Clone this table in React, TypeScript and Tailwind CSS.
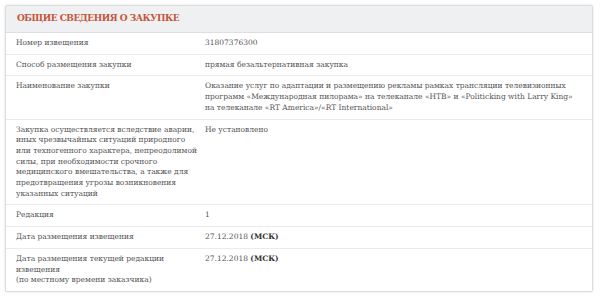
const rows: { label: React.ReactNode; value: React.ReactNode }[] = [
  { label: "Номер извещения", value: "31807376300" },
  { label: "Способ размещения закупки", value: "прямая безальтернативная закупка" },
  {
    label: "Наименование закупки",
    value:
      "Оказание услуг по адаптации и размещению рекламы рамках трансляции телевизионных программ «Международная пилорама» на телеканале «НТВ» и «Politicking with Larry King» на телеканале «RT America»/«RT International»",
  },
  {
    label: (
      <>
        Закупка осуществляется вследствие аварии,
        <br />
        иных чрезвычайных ситуаций природного
        <br />
        или техногенного характера, непреодолимой
        <br />
        силы, при необходимости срочного
        <br />
        медицинского вмешательства, а также для
        <br />
        предотвращения угрозы возникновения
        <br />
        указанных ситуаций
      </>
    ),
    value: "Не установлено",
  },
  { label: "Редакция", value: "1" },
  {
    label: "Дата размещения извещения",
    value: (
      <>
        27.12.2018 <b className="font-bold text-[#333]">(МСК)</b>
      </>
    ),
  },
  {
    label: (
      <>
        Дата размещения текущей редакции
        <br />
        извещения
        <br />
        (по местному времени заказчика)
      </>
    ),
    value: (
      <>
        27.12.2018 <b className="font-bold text-[#333]">(МСК)</b>
      </>
    ),
  },
];

export default function App() {
  return (
    <div className="w-[600px] h-[296px] bg-white pt-[5px] pl-[5px] font-['DejaVu_Serif',serif]">
      <div className="w-[588px] border border-[#dcdcdc] rounded-[2px] shadow-[0_0_3px_rgba(0,0,0,0.12)] overflow-hidden">
        <div className="h-[27px] bg-[#eef0f2] border-b border-[#dddfe2] flex items-center pl-[11px]">
          <h2 className="text-[9px] tracking-[-0.5px] font-bold text-[#c5553a] uppercase">Общие сведения о закупке</h2>
        </div>
        {rows.map((r, i) => (
          <div
            key={i}
            className={`grid grid-cols-[189px_1fr] px-[10px] py-[5px] text-[7.5px] leading-[10.7px] text-[#555] ${
              i < rows.length - 1 ? "border-b border-[#ebebeb]" : ""
            }`}
          >
            <div className="whitespace-nowrap">{r.label}</div>
            <div className="pr-[2px]">{r.value}</div>
          </div>
        ))}
      </div>
    </div>
  );
}
